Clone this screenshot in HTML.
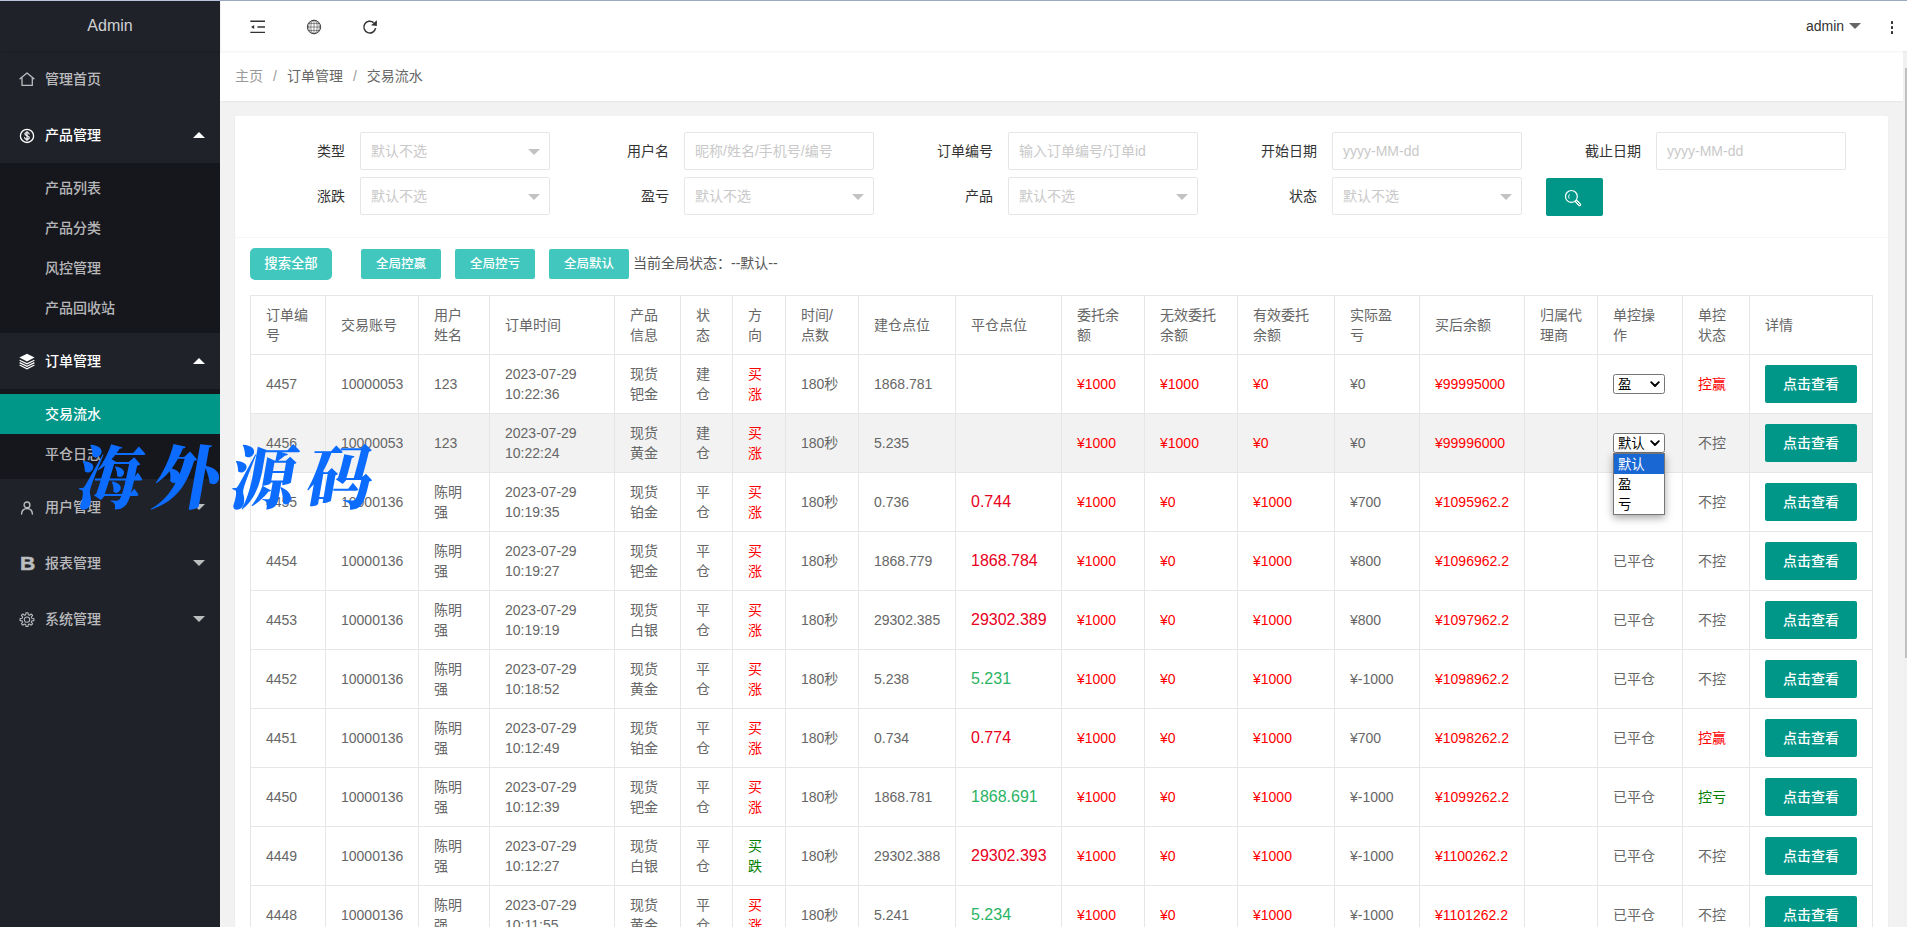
<!DOCTYPE html>
<html lang="zh-CN">
<head>
<meta charset="utf-8">
<title>Admin</title>
<style>
*{box-sizing:border-box;margin:0;padding:0}
html,body{width:1907px;height:927px;overflow:hidden}
body{position:relative;background:#f2f2f2;color:#333;font:14px/24px "Liberation Sans","Noto Sans CJK SC",sans-serif;}
a{text-decoration:none;color:inherit}
.topline{position:absolute;left:0;top:0;width:1907px;height:1px;background:#b7c4de;z-index:50}
/* sidebar */
.side{position:absolute;left:0;top:0;width:220px;height:927px;background:#20222a;z-index:10}
.logo{position:absolute;left:0;top:1px;width:220px;height:50px;line-height:49px;text-align:center;color:rgba(255,255,255,.8);font-size:16px;box-shadow:0 1px 2px 0 rgba(0,0,0,.15)}
.menu{position:absolute;left:0;top:51px;width:220px;list-style:none;font-weight:500}
.menu>li>a{display:block;position:relative;height:56px;line-height:56px;padding-left:45px;color:rgba(255,255,255,.7)}
.menu>li.open>a{color:#fff}
.menu .ic{position:absolute;left:18px;top:19px;width:18px;height:18px}
.menu .more{position:absolute;right:15px;top:25px;width:0;height:0;border:6px solid transparent;border-top-color:rgba(255,255,255,.7)}
.menu>li.open>a .more{border-top-color:transparent;border-bottom-color:#fff;top:19px}
.menu dl{background:rgba(0,0,0,.3);padding:5px 0}
.menu dd a{display:block;height:40px;line-height:40px;padding-left:45px;color:rgba(255,255,255,.7)}
.menu dd.this a{background:#009688;color:#fff}
/* header */
.head{position:absolute;left:220px;top:1px;width:1687px;height:50px;background:#fff;box-shadow:0 1px 2px 0 rgba(0,0,0,.05);z-index:5}
.head svg{position:absolute}
.admin{position:absolute;left:1586px;top:0;line-height:50px;color:#333}
.acaret{position:absolute;left:1629px;top:22px;width:0;height:0;border:6px solid transparent;border-top-color:#666}
.dots i{position:absolute;left:1670.5px;width:2.6px;height:2.6px;background:#333;border-radius:.6px}
/* breadcrumb */
.crumb{position:absolute;left:220px;top:51px;width:1683px;height:50px;background:#fff;line-height:50px;padding-left:15px;color:#999;box-shadow:0 1px 2px 0 rgba(0,0,0,.05)}
.crumb a{color:#999}
.crumb a.c{color:#666}
.crumb span{margin:0 10px;color:#999}
/* scrollbar */
.sbar{position:absolute;left:1903px;top:51px;width:4px;height:876px;background:#f1f1f1}
.sthumb{position:absolute;left:1905px;top:68px;width:2px;height:590px;background:#c1c1c1}
/* card */
.card{position:absolute;left:235px;top:116px;width:1653px;height:830px;background:#fff;border-radius:2px;box-shadow:0 1px 2px 0 rgba(0,0,0,.05)}
.fhead{position:absolute;left:0;top:0;width:1653px;height:122px;border-bottom:1px solid #f6f6f6}
.fl{position:absolute;width:110px;height:38px;line-height:38px;padding-right:15px;text-align:right;color:#333}
.fi{position:absolute;width:190px;height:38px;border:1px solid #e6e6e6;border-radius:2px;background:#fff;line-height:36px;padding-left:10px;color:#c9c9c9}
.fi i{position:absolute;right:9px;top:16px;width:0;height:0;border:6px solid transparent;border-top-color:#c2c2c2}
.sbtn{position:absolute;left:1311px;top:62px;width:57px;height:38px;background:#009688;border-radius:2px}
.btn{position:absolute;font-weight:500;color:#fff;text-align:center;background:#41c7bd}
.b1{left:15px;top:132px;width:82px;height:32px;line-height:31px;border-radius:5px;font-size:13.33px}
.b2{top:133px;width:80px;height:30px;line-height:31px;border-radius:2px;font-size:12.5px}
.gstat{position:absolute;left:398px;top:133px;line-height:29px;color:#555;font-size:14px}
/* table */
.tb{position:absolute;left:15px;top:179px;width:1623px;border-collapse:collapse;table-layout:fixed;color:#666;background:#fff}
.tb th,.tb td{border:1px solid #e6e6e6;padding:9px 15px;line-height:20px;height:59px;text-align:left;font-weight:400;font-size:14px;vertical-align:middle}
.tb tr.hov td{background:#f2f2f2}
.red{color:#ff0000}
.grn{color:#008000}
.big{font-size:16px}
.bred{color:#e8001c}
.bgrn{color:#2bb364}
.vbtn{display:block;width:92px;height:38px;line-height:38px;background:#009688;color:#fff;text-align:center;border-radius:2px;font-size:14px;font-weight:500}
.tb td.btd{padding-top:0;padding-bottom:0}
.sel{display:block;position:relative;width:52px;height:20px;border:1px solid #767676;border-radius:2.5px;background:#fff;color:#000;font-size:13.33px;line-height:19px;padding-left:4px}
.sel .chev{position:absolute;right:4px;top:6px}
.drop{position:absolute;left:1378px;top:337px;width:52px;height:62px;border:1px solid #767676;background:#fff;box-shadow:0 3px 8px rgba(0,0,0,.35);color:#000;font-size:13.33px;z-index:8}
.drop div{height:20px;line-height:21px;padding-left:4px}
.drop div.on{background:#1967d2;color:#fff}
/* watermark */
.wm{position:absolute;left:78px;top:435px;z-index:30;color:#0b6cff;font:900 69px/90px "Liberation Serif","Noto Serif CJK SC",serif;letter-spacing:12.5px;transform-origin:0 50%;transform:skewX(-10deg) scaleX(.94);white-space:nowrap;pointer-events:none}
</style>
</head>
<body>
<div class="topline"></div><div class="topline" style="left:220px;width:1687px;background:#9aa8c6"></div>

<div class="side">
  <div class="logo">Admin</div>
  <ul class="menu">
    <li><a><svg class="ic" viewBox="0 0 18 18"><path d="M2 8.8 L9 3 L16 8.8 M4 7.6 V15.4 H14.3 V7.6" fill="none" stroke="rgba(255,255,255,.7)" stroke-width="1.3" stroke-linejoin="round" stroke-linecap="round"/></svg>管理首页</a></li>
    <li class="open"><a><svg class="ic" viewBox="0 0 18 18"><circle cx="9" cy="9.9" r="6.6" fill="none" stroke="#fff" stroke-width="1.3"/><path d="M11.2 8 C11 6.9 10.1 6.5 9 6.5 C7.8 6.5 6.9 7.1 6.9 8.1 C6.9 10.2 11.3 9.4 11.3 11.6 C11.3 12.7 10.3 13.3 9 13.3 C7.7 13.3 6.8 12.8 6.6 11.6 M9 5.4 V14.5" fill="none" stroke="#fff" stroke-width="1.2" stroke-linecap="round"/></svg>产品管理<i class="more"></i></a>
      <dl><dd><a>产品列表</a></dd><dd><a>产品分类</a></dd><dd><a>风控管理</a></dd><dd><a>产品回收站</a></dd></dl>
    </li>
    <li class="open"><a><svg class="ic" viewBox="0 0 18 18"><path d="M9 1.8 L16.6 5.6 L9 9.4 L1.4 5.6 Z" fill="#fff"/><path d="M1.6 8.2 L9 11.9 L16.4 8.2 M1.6 10.6 L9 14.3 L16.4 10.6 M1.6 13 L9 16.7 L16.4 13" fill="none" stroke="#fff" stroke-width="1.25"/></svg>订单管理<i class="more"></i></a>
      <dl><dd class="this"><a>交易流水</a></dd><dd><a>平仓日志</a></dd></dl>
    </li>
    <li><a><svg class="ic" viewBox="0 0 18 18"><circle cx="9" cy="6.9" r="2.9" fill="none" stroke="rgba(255,255,255,.7)" stroke-width="1.4"/><path d="M3.6 16 C3.8 12.4 6 10.6 9 10.6 C12 10.6 14.2 12.4 14.4 16" fill="none" stroke="rgba(255,255,255,.7)" stroke-width="1.4" stroke-linecap="round"/></svg>用户管理<i class="more"></i></a></li>
    <li><a><svg class="ic" viewBox="0 0 18 18"><text transform="translate(9.6 16.1) scale(1.28 1.06)" x="0" y="0" font-size="16.5" font-weight="700" text-anchor="middle" fill="#bcbdbf" stroke="#bcbdbf" stroke-width=".45" font-family="Liberation Sans, sans-serif">B</text></svg>报表管理<i class="more"></i></a></li>
    <li><a><svg class="ic" viewBox="0 0 18 18"><g fill="none" stroke="rgba(255,255,255,.7)" stroke-width="1.05" stroke-linejoin="round"><circle cx="9.0" cy="9.6" r="2.7"/><path d="M7.71 4.77 L7.97 2.68 L10.03 2.68 L10.29 4.77 L11.50 5.27 L13.16 3.97 L14.63 5.44 L13.33 7.10 L13.83 8.31 L15.92 8.57 L15.92 10.63 L13.83 10.89 L13.33 12.10 L14.63 13.76 L13.16 15.23 L11.50 13.93 L10.29 14.43 L10.03 16.52 L7.97 16.52 L7.71 14.43 L6.50 13.93 L4.84 15.23 L3.37 13.76 L4.67 12.10 L4.17 10.89 L2.08 10.63 L2.08 8.57 L4.17 8.31 L4.67 7.10 L3.37 5.44 L4.84 3.97 L6.50 5.27 Z"/></g></svg>系统管理<i class="more"></i></a></li>
  </ul>
</div>

<div class="head">
  <svg style="left:30px;top:19px" width="16" height="14" viewBox="0 0 16 14"><path d="M0.3 1.3 H15 M7.4 7 H15 M0.3 12.4 H15" stroke="#333" stroke-width="1.4" fill="none"/><path d="M1 7 L4.2 5 V9 Z" fill="#333"/></svg>
  <svg style="left:86px;top:18px" width="16" height="16" viewBox="0 0 16 16"><g fill="none" stroke="#444" stroke-width=".6"><circle cx="8" cy="8" r="6.7" stroke-width="1"/><ellipse cx="8" cy="8" rx="3.2" ry="6.8"/><path d="M8 1.2 V14.8 M1.2 8 H14.8 M2.2 4.6 H13.8 M2.2 11.4 H13.8"/><ellipse cx="8" cy="8" rx="5.4" ry="6.8"/></g></svg>
  <svg style="left:142px;top:18px" width="16" height="16" viewBox="0 0 16 16"><path d="M13.6 9.2 A5.9 5.9 0 1 1 11.6 3.6" fill="none" stroke="#333" stroke-width="1.5"/><path d="M9 6.2 L14.9 1.3 L14.9 7 Z" fill="#333"/></svg>
  <span class="admin">admin</span><i class="acaret"></i>
  <span class="dots"><i style="top:20px"></i><i style="top:25px"></i><i style="top:30px"></i></span>
</div>

<div class="crumb"><a>主页</a><span>/</span><a class="c">订单管理</a><span>/</span><a class="c">交易流水</a></div>
<div class="sbar"></div><div class="sthumb"></div>

<div class="card">
  <div class="fhead">
    <div class="fl" style="left:15px;top:16px">类型</div><div class="fi" style="left:125px;top:16px">默认不选<i></i></div>
    <div class="fl" style="left:339px;top:16px">用户名</div><div class="fi" style="left:449px;top:16px">昵称/姓名/手机号/编号</div>
    <div class="fl" style="left:663px;top:16px">订单编号</div><div class="fi" style="left:773px;top:16px">输入订单编号/订单id</div>
    <div class="fl" style="left:987px;top:16px">开始日期</div><div class="fi" style="left:1097px;top:16px">yyyy-MM-dd</div>
    <div class="fl" style="left:1311px;top:16px">截止日期</div><div class="fi" style="left:1421px;top:16px">yyyy-MM-dd</div>
    <div class="fl" style="left:15px;top:61px">涨跌</div><div class="fi" style="left:125px;top:61px">默认不选<i></i></div>
    <div class="fl" style="left:339px;top:61px">盈亏</div><div class="fi" style="left:449px;top:61px">默认不选<i></i></div>
    <div class="fl" style="left:663px;top:61px">产品</div><div class="fi" style="left:773px;top:61px">默认不选<i></i></div>
    <div class="fl" style="left:987px;top:61px">状态</div><div class="fi" style="left:1097px;top:61px">默认不选<i></i></div>
    <a class="sbtn"><svg style="position:absolute;left:17px;top:10px" width="20" height="20" viewBox="0 0 20 20"><circle cx="8.4" cy="8.4" r="5.9" fill="none" stroke="#fff" stroke-width="1.2"/><path d="M13.4 13.4 L16.6 16.6" stroke="#fff" stroke-width="3.2" stroke-linecap="round"/><path d="M13.6 13.6 L16.5 16.5" stroke="#009688" stroke-width="1" stroke-linecap="round"/><path d="M6.2 10.4 A3.4 3.4 0 0 1 6.4 6.4" fill="none" stroke="#fff" stroke-width="1"/></svg></a>
  </div>
  <a class="btn b1">搜索全部</a>
  <a class="btn b2" style="left:126px">全局控赢</a>
  <a class="btn b2" style="left:220px">全局控亏</a>
  <a class="btn b2" style="left:314px">全局默认</a>
  <span class="gstat">当前全局状态：--默认--</span>
  <table class="tb"><colgroup><col style="width:75px"><col style="width:93px"><col style="width:71px"><col style="width:125px"><col style="width:66px"><col style="width:52px"><col style="width:53px"><col style="width:73px"><col style="width:97px"><col style="width:106px"><col style="width:83px"><col style="width:93px"><col style="width:97px"><col style="width:85px"><col style="width:105px"><col style="width:73px"><col style="width:85px"><col style="width:67px"><col style="width:123px"></colgroup><thead><tr><th>订单编<br>号</th><th>交易账号</th><th>用户<br>姓名</th><th>订单时间</th><th>产品<br>信息</th><th>状<br>态</th><th>方<br>向</th><th>时间/<br>点数</th><th>建仓点位</th><th>平仓点位</th><th>委托余<br>额</th><th>无效委托<br>余额</th><th>有效委托<br>余额</th><th>实际盈<br>亏</th><th>买后余额</th><th>归属代<br>理商</th><th>单控操<br>作</th><th>单控<br>状态</th><th>详情</th></tr></thead><tbody>
<tr><td>4457</td><td>10000053</td><td>123</td><td>2023-07-29<br>10:22:36</td><td>现货<br>钯金</td><td>建<br>仓</td><td class="red">买<br>涨</td><td>180秒</td><td>1868.781</td><td></td><td class="red">¥1000</td><td class="red">¥1000</td><td class="red">¥0</td><td>¥0</td><td class="red">¥99995000</td><td></td><td><span class="sel"><span class="sv">盈</span><svg class="chev" width="10" height="7" viewBox="0 0 10 7"><path d="M1.2 1.2 L5 5 L8.8 1.2" fill="none" stroke="#000" stroke-width="1.9" stroke-linecap="round" stroke-linejoin="round"/></svg></span></td><td class="red">控赢</td><td class="btd"><a class="vbtn">点击查看</a></td></tr>
<tr class="hov"><td>4456</td><td>10000053</td><td>123</td><td>2023-07-29<br>10:22:24</td><td>现货<br>黄金</td><td>建<br>仓</td><td class="red">买<br>涨</td><td>180秒</td><td>5.235</td><td></td><td class="red">¥1000</td><td class="red">¥1000</td><td class="red">¥0</td><td>¥0</td><td class="red">¥99996000</td><td></td><td><span class="sel"><span class="sv">默认</span><svg class="chev" width="10" height="7" viewBox="0 0 10 7"><path d="M1.2 1.2 L5 5 L8.8 1.2" fill="none" stroke="#000" stroke-width="1.9" stroke-linecap="round" stroke-linejoin="round"/></svg></span></td><td>不控</td><td class="btd"><a class="vbtn">点击查看</a></td></tr>
<tr><td>4455</td><td>10000136</td><td>陈明<br>强</td><td>2023-07-29<br>10:19:35</td><td>现货<br>铂金</td><td>平<br>仓</td><td class="red">买<br>涨</td><td>180秒</td><td>0.736</td><td><span class="big bred">0.744</span></td><td class="red">¥1000</td><td class="red">¥0</td><td class="red">¥1000</td><td>¥700</td><td class="red">¥1095962.2</td><td></td><td>已平仓</td><td>不控</td><td class="btd"><a class="vbtn">点击查看</a></td></tr>
<tr><td>4454</td><td>10000136</td><td>陈明<br>强</td><td>2023-07-29<br>10:19:27</td><td>现货<br>钯金</td><td>平<br>仓</td><td class="red">买<br>涨</td><td>180秒</td><td>1868.779</td><td><span class="big bred">1868.784</span></td><td class="red">¥1000</td><td class="red">¥0</td><td class="red">¥1000</td><td>¥800</td><td class="red">¥1096962.2</td><td></td><td>已平仓</td><td>不控</td><td class="btd"><a class="vbtn">点击查看</a></td></tr>
<tr><td>4453</td><td>10000136</td><td>陈明<br>强</td><td>2023-07-29<br>10:19:19</td><td>现货<br>白银</td><td>平<br>仓</td><td class="red">买<br>涨</td><td>180秒</td><td>29302.385</td><td><span class="big bred">29302.389</span></td><td class="red">¥1000</td><td class="red">¥0</td><td class="red">¥1000</td><td>¥800</td><td class="red">¥1097962.2</td><td></td><td>已平仓</td><td>不控</td><td class="btd"><a class="vbtn">点击查看</a></td></tr>
<tr><td>4452</td><td>10000136</td><td>陈明<br>强</td><td>2023-07-29<br>10:18:52</td><td>现货<br>黄金</td><td>平<br>仓</td><td class="red">买<br>涨</td><td>180秒</td><td>5.238</td><td><span class="big bgrn">5.231</span></td><td class="red">¥1000</td><td class="red">¥0</td><td class="red">¥1000</td><td>¥-1000</td><td class="red">¥1098962.2</td><td></td><td>已平仓</td><td>不控</td><td class="btd"><a class="vbtn">点击查看</a></td></tr>
<tr><td>4451</td><td>10000136</td><td>陈明<br>强</td><td>2023-07-29<br>10:12:49</td><td>现货<br>铂金</td><td>平<br>仓</td><td class="red">买<br>涨</td><td>180秒</td><td>0.734</td><td><span class="big bred">0.774</span></td><td class="red">¥1000</td><td class="red">¥0</td><td class="red">¥1000</td><td>¥700</td><td class="red">¥1098262.2</td><td></td><td>已平仓</td><td class="red">控赢</td><td class="btd"><a class="vbtn">点击查看</a></td></tr>
<tr><td>4450</td><td>10000136</td><td>陈明<br>强</td><td>2023-07-29<br>10:12:39</td><td>现货<br>钯金</td><td>平<br>仓</td><td class="red">买<br>涨</td><td>180秒</td><td>1868.781</td><td><span class="big bgrn">1868.691</span></td><td class="red">¥1000</td><td class="red">¥0</td><td class="red">¥1000</td><td>¥-1000</td><td class="red">¥1099262.2</td><td></td><td>已平仓</td><td class="grn">控亏</td><td class="btd"><a class="vbtn">点击查看</a></td></tr>
<tr><td>4449</td><td>10000136</td><td>陈明<br>强</td><td>2023-07-29<br>10:12:27</td><td>现货<br>白银</td><td>平<br>仓</td><td class="grn">买<br>跌</td><td>180秒</td><td>29302.388</td><td><span class="big bred">29302.393</span></td><td class="red">¥1000</td><td class="red">¥0</td><td class="red">¥1000</td><td>¥-1000</td><td class="red">¥1100262.2</td><td></td><td>已平仓</td><td>不控</td><td class="btd"><a class="vbtn">点击查看</a></td></tr>
<tr><td>4448</td><td>10000136</td><td>陈明<br>强</td><td>2023-07-29<br>10:11:55</td><td>现货<br>黄金</td><td>平<br>仓</td><td class="red">买<br>涨</td><td>180秒</td><td>5.241</td><td><span class="big bgrn">5.234</span></td><td class="red">¥1000</td><td class="red">¥0</td><td class="red">¥1000</td><td>¥-1000</td><td class="red">¥1101262.2</td><td></td><td>已平仓</td><td>不控</td><td class="btd"><a class="vbtn">点击查看</a></td></tr>
</tbody></table>
  <div class="drop"><div class="on">默认</div><div>盈</div><div>亏</div></div>
</div>

<div class="wm">海外源码</div>
</body>
</html>
